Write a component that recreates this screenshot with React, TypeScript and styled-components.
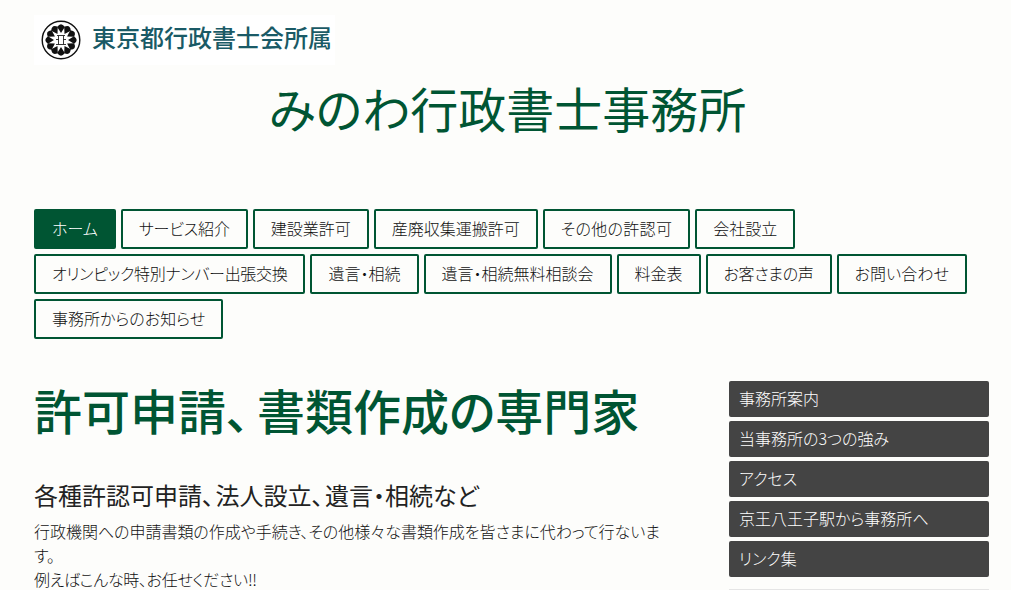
import React from 'react';
import styled, { createGlobalStyle } from 'styled-components';

const GlobalStyle = createGlobalStyle`
  html, body {
    margin: 0;
    padding: 0;
    height: 590px;
    overflow: hidden;
    background: #fdfdfb;
    font-family: "Noto Sans CJK JP", "Noto Sans", sans-serif;
    font-feature-settings: "palt";
    color: #111;
  }
`;

const Page = styled.div`
  width: 955px;
  height: 590px;
  overflow: hidden;
  margin-left: 34px;
  padding-top: 15px;
  box-sizing: border-box;
`;

const LogoBanner = styled.div`
  display: flex;
  align-items: center;
  gap: 11px;
  width: 301px;
  height: 50px;
  padding-left: 7px;
  box-sizing: border-box;
  background: #fff;
`;

const LogoText = styled.span`
  font-size: 24px;
  font-weight: 500;
  font-feature-settings: normal;
  line-height: 44px;
  height: 50px;
  color: #1a5a66;
  white-space: nowrap;
`;

const SiteTitle = styled.h1`
  margin: 0;
  height: 144px;
  padding-right: 8px;
  text-align: center;
  font-size: 48px;
  font-weight: 400;
  line-height: 84px;
  color: #005533;
`;

const Nav = styled.nav`
  display: flex;
  flex-wrap: wrap;
  gap: 5px;
  height: 172px;
  align-content: flex-start;
`;

const NavItem = styled.a<{ $active?: boolean; $tracking?: number }>`
  display: block;
  height: 40px;
  padding: 0 16px;
  box-sizing: border-box;
  border: 2px solid #005533;
  border-radius: 2px;
  background: ${({ $active }) => ($active ? '#005533' : 'transparent')};
  color: ${({ $active }) => ($active ? '#fff' : '#111')};
  font-size: 16px;
  font-weight: 300;
  letter-spacing: ${({ $tracking }) => $tracking ?? 0}px;
  line-height: 35px;
  white-space: nowrap;
`;

const Columns = styled.div`
  display: flex;
  justify-content: space-between;
`;

const Main = styled.main`
  width: 640px;
`;

const Heading = styled.h2`
  margin: -3px 0 37px;
  font-size: 48px;
  font-weight: 500;
  line-height: 62px;
  color: #005533;
  white-space: nowrap;
`;

const SubHeading = styled.h3`
  margin: 0 0 6px;
  font-size: 24px;
  font-weight: 400;
  line-height: 36px;
  color: #222;
  white-space: nowrap;
`;

const Pause = styled.span<{ $gap: number }>`
  margin-right: ${({ $gap }) => $gap}px;
`;

const Body = styled.p`
  margin: 0;
  font-size: 16px;
  font-weight: 300;
  line-height: 24px;
  letter-spacing: -0.03px;
  color: #111;
`;

const BodyNote = styled.span`
  letter-spacing: -0.3px;
`;

const Side = styled.aside`
  width: 260px;
  display: flex;
  flex-direction: column;
  gap: 4px;
`;

const SideItem = styled.a`
  display: block;
  height: 36px;
  padding-left: 10px;
  border-radius: 2px;
  background: #444;
  color: #fff;
  font-size: 16px;
  font-weight: 300;
  line-height: 35px;
  white-space: nowrap;
`;

const SideRule = styled.div`
  height: 1px;
  margin-top: 8px;
  background: #e5e5e5;
`;

const petals = Array.from({ length: 12 }, (_, i) => i * 30);

const Emblem = () => (
  <svg width="40" height="40" viewBox="0 0 40 40" aria-hidden="true">
    <circle cx="20" cy="20" r="18.8" fill="none" stroke="#111" strokeWidth="1.4" />
    {petals.map(a => (
      <path key={a} d="M20 13 L16.2 7 Q20 1.6 23.8 7 Z" fill="#111" transform={`rotate(${a} 20 20)`} />
    ))}
    <circle cx="20" cy="20" r="7" fill="#fff" />
    <path d="M16 15.5h8M15 24.5h10M17.5 15.5v9M22.5 15.5v9M15 19.5h3M22 19.5h3" stroke="#222" strokeWidth="0.9" fill="none" />
  </svg>
);

const navItems: { label: string; tracking?: number }[] = [
  { label: 'ホーム' },
  { label: 'サービス紹介', tracking: -0.15 },
  { label: '建設業許可' },
  { label: '産廃収集運搬許可' },
  { label: 'その他の許認可', tracking: 0.3 },
  { label: '会社設立' },
  { label: 'オリンピック特別ナンバー出張交換', tracking: -0.3 },
  { label: '遺言・相続' },
  { label: '遺言・相続無料相談会' },
  { label: '料金表' },
  { label: 'お客さまの声', tracking: -0.3 },
  { label: 'お問い合わせ', tracking: 0.1 },
  { label: '事務所からのお知らせ' },
];

const sideItems = ['事務所案内', '当事務所の3つの強み', 'アクセス', '京王八王子駅から事務所へ', 'リンク集'];

const App: React.FC = () => {
  return (
    <>
      <GlobalStyle />
      <Page>
        <LogoBanner>
          <Emblem />
          <LogoText>東京都行政書士会所属</LogoText>
        </LogoBanner>
        <SiteTitle>みのわ行政書士事務所</SiteTitle>
        <Nav>
          {navItems.map((item, i) => (
            <NavItem key={item.label} $active={i === 0} $tracking={item.tracking}>
              {item.label}
            </NavItem>
          ))}
        </Nav>
        <Columns>
          <Main>
            <Heading>
              許可申請<Pause $gap={7}>、</Pause>書類作成の専門家
            </Heading>
            <SubHeading>
              各種許認可申請<Pause $gap={1.5}>、</Pause>法人設立<Pause $gap={1.5}>、</Pause>遺言・相続など
            </SubHeading>
            <Body>
              行政機関への申請書類の作成や手続き、その他様々な書類作成を皆さまに代わって行ないます。
              <br />
              <BodyNote>例えばこんな時、お任せください!!</BodyNote>
            </Body>
          </Main>
          <Side>
            {sideItems.map(item => (
              <SideItem key={item}>{item}</SideItem>
            ))}
            <SideRule />
          </Side>
        </Columns>
      </Page>
    </>
  );
};

export default App;
